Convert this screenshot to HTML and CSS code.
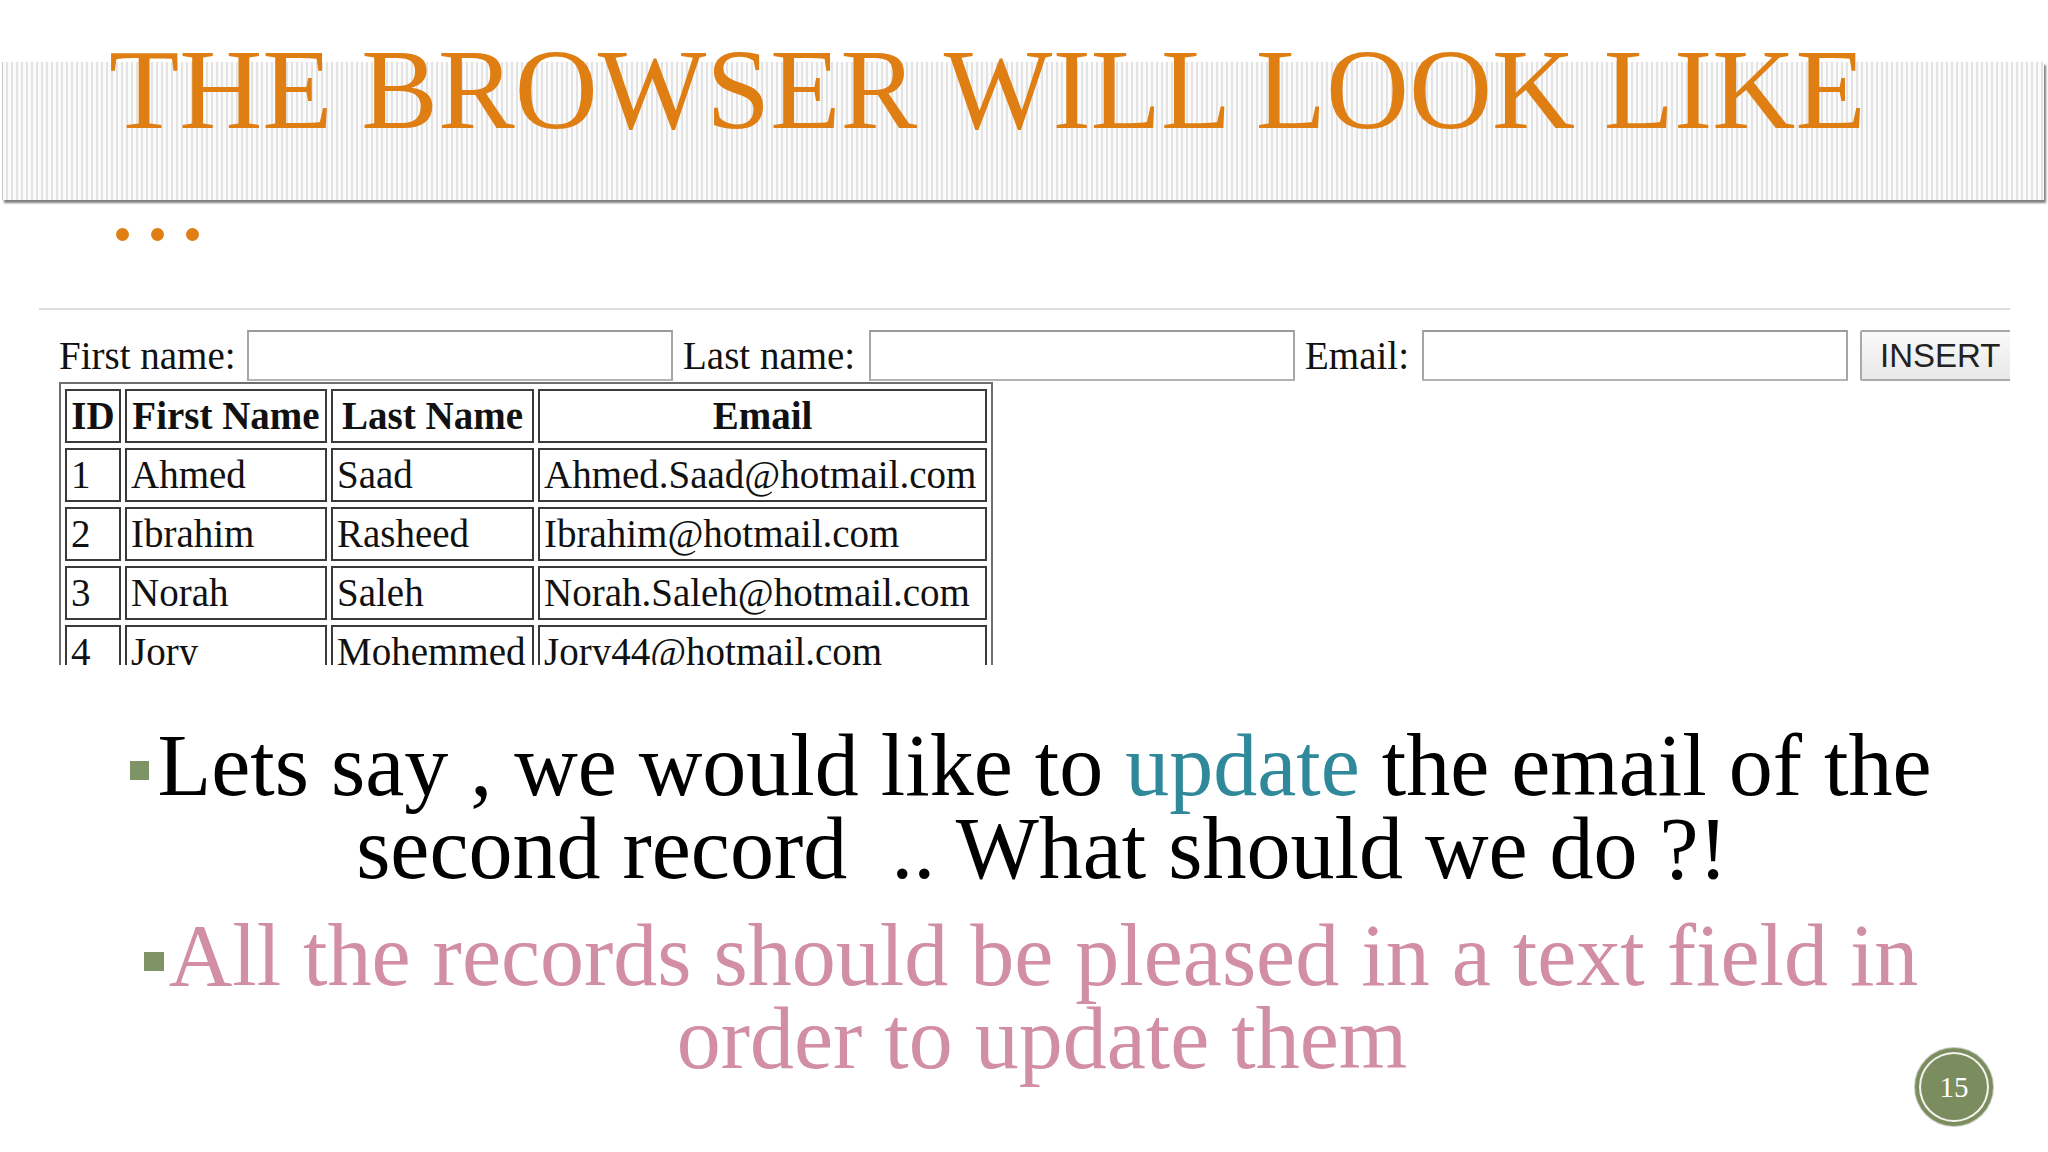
FILE: index.html
```html
<!DOCTYPE html>
<html lang="en">
<head>
<meta charset="utf-8">
<title>The browser will look like</title>
<link rel="stylesheet" href="styles.css">
</head>
<body>
<div class="slide">
  <header class="band">
    <h1 class="title">THE BROWSER WILL LOOK LIKE</h1>
  </header>
  <div class="dots"><span></span><span></span><span></span></div>

  <div class="shot">
    <form class="form-row">
      <label class="lbl lbl-first">First name:</label>
      <input class="field" type="text">
      <label class="lbl lbl-last">Last name:</label>
      <input class="field" type="text">
      <label class="lbl lbl-email">Email:</label>
      <input class="field field-last" type="text">
      <button class="btn" type="button">INSERT</button>
    </form>
    <table class="grid">
      <tr><th class="c-id">ID</th><th class="c-fn">First Name</th><th class="c-ln">Last Name</th><th class="c-em">Email</th></tr>
      <tr><td>1</td><td>Ahmed</td><td>Saad</td><td>Ahmed.Saad@hotmail.com</td></tr>
      <tr><td>2</td><td>Ibrahim</td><td>Rasheed</td><td>Ibrahim@hotmail.com</td></tr>
      <tr><td>3</td><td>Norah</td><td>Saleh</td><td>Norah.Saleh@hotmail.com</td></tr>
      <tr><td>4</td><td>Jory</td><td>Mohemmed</td><td>Jory44@hotmail.com</td></tr>
    </table>
  </div>

  <div class="points">
    <p class="point"><span class="bullet"></span>Lets say , we would like to <span class="hl">update</span> the email of the&nbsp;<br>second record&nbsp; .. What should we do ?!</p>
    <p class="point pink"><span class="bullet b2"></span>All the records should be pleased in a text field in&nbsp;<br>order to update them</p>
  </div>

  <div class="page-num">15</div>
</div>
</body>
</html>
```

FILE: styles.css
```css
* { box-sizing: border-box; }

html, body {
  margin: 0;
  padding: 0;
  background: #ffffff;
}

body {
  width: 2048px;
  height: 1152px;
  overflow: hidden;
  font-family: "Liberation Serif", "Times New Roman", serif;
  color: #000;
}

.slide {
  position: relative;
  width: 2048px;
  height: 1152px;
  overflow: hidden;
  display: flow-root;
}

/* ---------- title band ---------- */
.band {
  display: flow-root;
  margin: 62px 0 0 2px;
  width: 2042px;
  height: 138px;
  background: repeating-linear-gradient(90deg, #fbfbfb 0 3px, #e3e3e3 3px 5px);
  border-left: 1px solid #c8c8c8;
  box-shadow: 2px 3px 2px rgba(0, 0, 0, 0.5);
}

.title {
  margin: -30px 0 0 0;
  padding-left: 106px;
  font-family: "Liberation Serif", "Times New Roman", serif;
  font-weight: normal;
  font-size: 115px;
  line-height: 115px;
  color: #df7e12;
  white-space: nowrap;
}

.dots {
  display: flex;
  gap: 22px;
  margin: 28px 0 0 116px;
  height: 13px;
}
.dots span {
  width: 13px;
  height: 13px;
  border-radius: 50%;
  background: #df7e12;
}

/* ---------- browser screenshot ---------- */
.shot {
  margin: 67px 0 0 39px;
  width: 1971px;
  height: 357px;
  border-top: 2px solid #dedede;
  padding-left: 20px;
  overflow: hidden;
  color: #111;
  font-family: "Liberation Serif", "Times New Roman", serif;
  font-size: 39px;
}

.form-row {
  display: flex;
  align-items: center;
  margin: 20px 0 0 0;
  height: 51px;
}

.lbl {
  flex: none;
  white-space: nowrap;
  line-height: 1;
}
.lbl-first { width: 188px; }
.lbl-last { width: 186px; }
.lbl-email { width: 117px; }

.field {
  flex: none;
  width: 426px;
  height: 51px;
  margin: 0 10px 0 0;
  border: 2px solid #a6a6a6;
  border-top-color: #9a9a9a;
  border-bottom-color: #b4b4b4;
  background: #fff;
  padding: 0;
}
.field-last { margin-right: 12px; }

.btn {
  flex: none;
  width: 170px;
  height: 51px;
  padding: 0 0 0 18px;
  text-align: left;
  font-family: "Liberation Sans", Arial, sans-serif;
  font-size: 33px;
  color: #222;
  background: linear-gradient(#fafafa, #e8e8e8);
  border: 2px solid #a9a9a9;
  border-radius: 2px;
}

.grid {
  margin-top: 1px;
  border: 2px solid #6e6e6e;
  border-spacing: 4px 5px;
  font-size: 39px;
  color: #111;
}
.grid tr { height: 54px; }
.grid th,
.grid td {
  border: 2px solid #3a3a3a;
  padding: 0 4px;
  white-space: nowrap;
  line-height: 1.1;
}
.grid th { font-weight: bold; text-align: center; }
.grid td { text-align: left; }
.c-id { width: 56px; }
.c-fn { width: 202px; }
.c-ln { width: 203px; }
.c-em { width: 449px; }

/* ---------- bullet points ---------- */
.points {
  margin: 59px 0 0 92px;
  width: 1900px;
  text-align: center;
  font-family: "Liberation Serif", "Times New Roman", serif;
  font-size: 88px;
  line-height: 83px;
}

.point {
  margin: 0;
  color: #000;
}
.point + .point { margin-top: 24px; }

.bullet {
  display: inline-block;
  width: 19px;
  height: 19px;
  background: #7e9366;
  vertical-align: 15px;
  margin-right: 8px;
}
.bullet.b2 {
  width: 20px;
  margin-right: 5px;
  vertical-align: 14px;
}

.hl { color: #2f899a; }
.pink { color: #d18ea5; }

/* ---------- slide number ---------- */
.page-num {
  position: absolute;
  left: 1915px;
  top: 1048px;
  width: 78px;
  height: 78px;
  border-radius: 50%;
  background: #7b8c5e;
  box-shadow: inset 0 0 0 4px #7b8c5e, inset 0 0 0 6px #f3f3ec, 0 0 0 1px rgba(90, 100, 70, 0.35);
  display: flex;
  align-items: center;
  justify-content: center;
  color: #fff;
  font-family: "Liberation Serif", "Times New Roman", serif;
  font-size: 29px;
}
```
